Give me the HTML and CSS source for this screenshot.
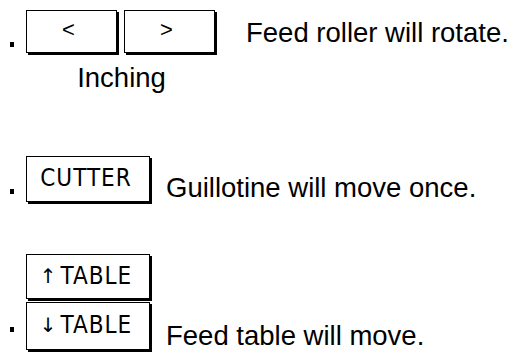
FILE: index.html
```html
<!DOCTYPE html>
<html lang="en">
<head>
    <meta charset="UTF-8">
    <title>Operation keys</title>
    <link rel="stylesheet" href="styles.css">
</head>
<body>
    <div id="list">
        <div class="item item-inch">
            <span class="dot"></span>
            <div class="keys">
                <div class="pair">
                    <div class="key key-inch">&lt;</div>
                    <div class="key key-inch">&gt;</div>
                </div>
                <div class="caption">Inching</div>
            </div>
            <div class="note note-inch">Feed roller will rotate.</div>
        </div>

        <div class="item item-cut">
            <span class="dot"></span>
            <div class="key key-wide">CUTTER</div>
            <div class="note">Guillotine will move once.</div>
        </div>

        <div class="item item-table">
            <span class="dot"></span>
            <div class="stack">
                <div class="key key-wide key-up"><span class="arrow">&uarr;</span>TABLE</div>
                <div class="key key-wide key-down"><span class="arrow">&darr;</span>TABLE</div>
            </div>
            <div class="note">Feed table will move.</div>
        </div>
    </div>
</body>
</html>
```

FILE: styles.css
```css
*{
    margin: 0;
    padding: 0;
    box-sizing: border-box;
}
body{
    background: #fff;
    color: #000;
    font-family: "Liberation Sans", Arial, sans-serif;
}
#list{
    padding: 10px 0 0 10px;
    display: flex;
    flex-direction: column;
}
.item{
    display: flex;
    align-items: flex-end;
}
.item-cut{
    margin-top: 62px;
}
.item-table{
    margin-top: 50px;
}
.dot{
    width: 4px;
    height: 5px;
    background: #000;
    margin-right: 12px;
    flex: none;
}
.item-inch .dot{
    align-self: flex-start;
    margin-top: 32px;
}
.item-cut .dot{
    margin-bottom: 10px;
}
.item-table .dot{
    margin-bottom: 20px;
}
.keys{
    display: flex;
    flex-direction: column;
}
.pair{
    display: flex;
    gap: 5px;
}
.key{
    border: 1px solid #000;
    box-shadow: 2px 2px 0 #000;
    background: #fff;
    display: flex;
    align-items: center;
    justify-content: center;
    font: 24px "Liberation Sans Narrow", "DejaVu Sans Condensed", sans-serif;
    margin-right: 2px;
    margin-bottom: 2px;
}
.key-inch{
    width: 91px;
    height: 43px;
    font-family: "Liberation Sans", sans-serif;
    font-size: 22px;
    padding: 0 6px 4px 0;
}
.key-wide{
    width: 124px;
    height: 46px;
    letter-spacing: 1px;
    padding: 0 4px 2px 0;
}
.key-up{
    height: 45px;
}
.key-down{
    height: 48px;
}
.arrow{
    font-family: "DejaVu Sans", sans-serif;
    font-size: 20px;
    letter-spacing: 0;
    margin-right: 4px;
}
.stack{
    display: flex;
    flex-direction: column;
    gap: 1px;
}
.caption{
    font-size: 27.5px;
    line-height: 32px;
    margin-top: 7px;
    text-align: center;
}
.note{
    font-size: 27.5px;
    line-height: 32px;
    margin-left: 14px;
}
.note-inch{
    align-self: flex-start;
    margin: 7px 0 0 29px;
}
```
